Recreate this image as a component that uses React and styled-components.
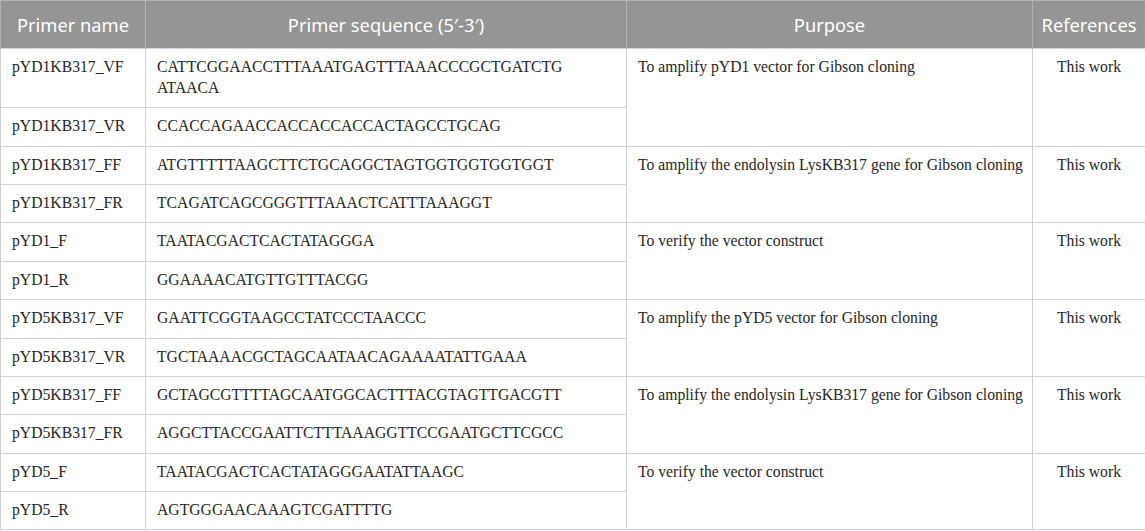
import React from 'react';
import styled, { createGlobalStyle } from 'styled-components';

const GlobalStyle = createGlobalStyle`
  html, body {
    margin: 0;
    padding: 0;
    background: #ffffff;
  }
`;

const Table = styled.table`
  width: 1145px;
  table-layout: fixed;
  border-collapse: collapse;
  font-family: "Liberation Serif", "Times New Roman", serif;
  color: #262626;
`;

const HeadCell = styled.th`
  height: 48px;
  padding: 0 4px;
  box-sizing: border-box;
  background: #959595;
  color: #ffffff;
  font-family: "Noto Sans", "Open Sans", sans-serif;
  font-size: 18.3px;
  font-weight: 400;
  text-align: center;
  vertical-align: middle;
  border: 1px solid #b4b4b4;
  border-bottom: none;
  white-space: nowrap;
`;

const Cell = styled.td`
  padding: 8px ${props => props.$tight ? '6px' : '11px'} 8.6px 11px;
  font-size: 15.7px;
  line-height: 20.8px;
  text-align: ${props => props.$center ? 'center' : 'left'};
  vertical-align: top;
  border: 1px solid #d2d2d2;
  white-space: ${props => props.$nowrap ? 'nowrap' : 'pre-line'};
`;

const groups = [
  {
    purpose: 'To amplify pYD1 vector for Gibson cloning',
    ref: 'This work',
    rows: [
      ['pYD1KB317_VF', 'CATTCGGAACCTTTAAATGAGTTTAAACCCGCTGATCTG\nATAACA'],
      ['pYD1KB317_VR', 'CCACCAGAACCACCACCACCACTAGCCTGCAG'],
    ],
  },
  {
    purpose: 'To amplify the endolysin LysKB317 gene for Gibson cloning',
    ref: 'This work',
    rows: [
      ['pYD1KB317_FF', 'ATGTTTTTAAGCTTCTGCAGGCTAGTGGTGGTGGTGGT'],
      ['pYD1KB317_FR', 'TCAGATCAGCGGGTTTAAACTCATTTAAAGGT'],
    ],
  },
  {
    purpose: 'To verify the vector construct',
    ref: 'This work',
    rows: [
      ['pYD1_F', 'TAATACGACTCACTATAGGGA'],
      ['pYD1_R', 'GGAAAACATGTTGTTTACGG'],
    ],
  },
  {
    purpose: 'To amplify the pYD5 vector for Gibson cloning',
    ref: 'This work',
    rows: [
      ['pYD5KB317_VF', 'GAATTCGGTAAGCCTATCCCTAACCC'],
      ['pYD5KB317_VR', 'TGCTAAAACGCTAGCAATAACAGAAAATATTGAAA'],
    ],
  },
  {
    purpose: 'To amplify the endolysin LysKB317 gene for Gibson cloning',
    ref: 'This work',
    rows: [
      ['pYD5KB317_FF', 'GCTAGCGTTTTAGCAATGGCACTTTACGTAGTTGACGTT'],
      ['pYD5KB317_FR', 'AGGCTTACCGAATTCTTTAAAGGTTCCGAATGCTTCGCC'],
    ],
  },
  {
    purpose: 'To verify the vector construct',
    ref: 'This work',
    rows: [
      ['pYD5_F', 'TAATACGACTCACTATAGGGAATATTAAGC'],
      ['pYD5_R', 'AGTGGGAACAAAGTCGATTTTG'],
    ],
  },
];

const App = () => {
  return (
    <>
      <GlobalStyle />
      <Table>
        <colgroup>
          <col style={{ width: 145 }} />
          <col style={{ width: 481 }} />
          <col style={{ width: 406 }} />
          <col style={{ width: 113 }} />
        </colgroup>
        <thead>
          <tr>
            <HeadCell>Primer name</HeadCell>
            <HeadCell>Primer sequence (5′-3′)</HeadCell>
            <HeadCell>Purpose</HeadCell>
            <HeadCell>References</HeadCell>
          </tr>
        </thead>
        <tbody>
          {groups.map((group, gi) =>
            group.rows.map(([name, seq], ri) => (
              <tr key={`${gi}-${ri}`}>
                <Cell>{name}</Cell>
                <Cell>{seq}</Cell>
                {ri === 0 && (
                  <>
                    <Cell rowSpan={group.rows.length} $nowrap $tight>{group.purpose}</Cell>
                    <Cell rowSpan={group.rows.length} $center>{group.ref}</Cell>
                  </>
                )}
              </tr>
            ))
          )}
        </tbody>
      </Table>
    </>
  );
};

export default App;
